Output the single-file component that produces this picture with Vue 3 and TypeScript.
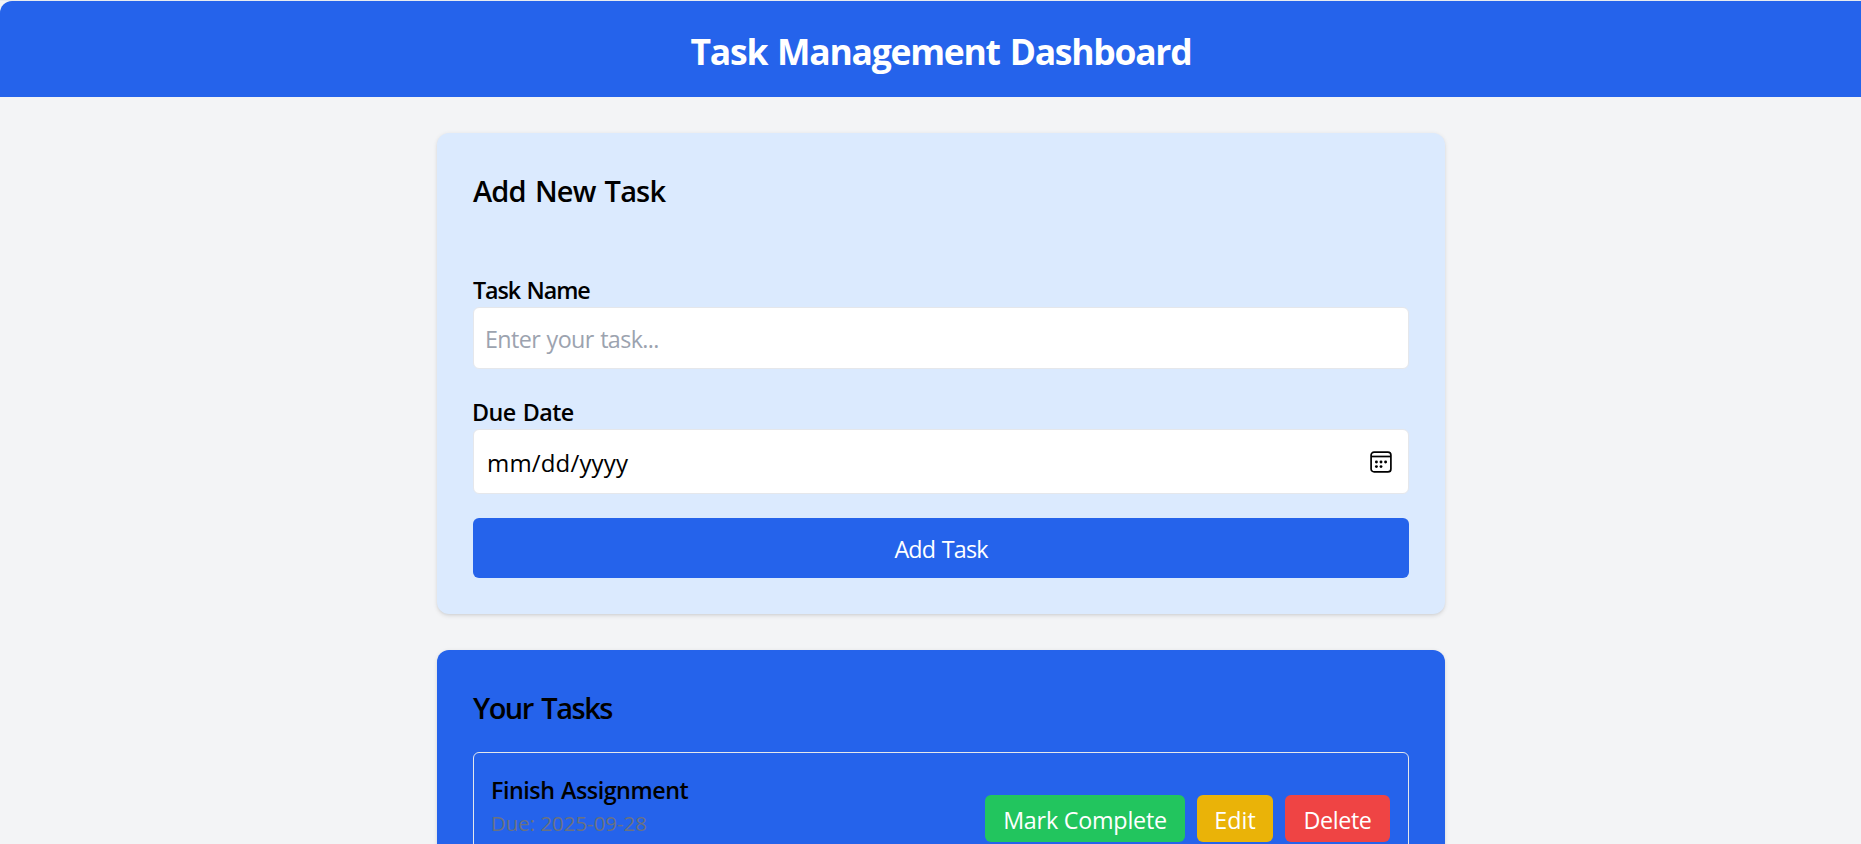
<script setup lang="ts">
import { ref } from 'vue'

interface Task {
  id: number
  name: string
  due: string
}

const taskName = ref('')
const tasks = ref<Task[]>([{ id: 1, name: 'Finish Assignment', due: '2025-09-28' }])
</script>

<template>
  <div class="viewport">
    <div class="page">
      <header class="header"><h1>Task Management Dashboard</h1></header>
      <main class="main">
        <section class="card add-card">
          <h2 class="add-title">Add New Task</h2>
          <form @submit.prevent>
            <div class="field">
              <label class="name-label" for="name">Task Name</label>
              <input id="name" v-model="taskName" class="control" type="text" placeholder="Enter your task..." />
            </div>
            <div class="field">
              <span class="label date-label">Due Date</span>
              <div class="control date">
                <span>mm/dd/yyyy</span>
                <svg width="23" height="23" viewBox="0 0 23 23" fill="none" stroke="#000" stroke-width="1.7">
                  <rect x="1.1" y="1.1" width="19.8" height="19.8" rx="3" />
                  <path d="M1.1 5.5h19.8" />
                  <g fill="#000" stroke="none">
                    <circle cx="6.4" cy="11" r="1.45" />
                    <circle cx="11" cy="11" r="1.45" />
                    <circle cx="15.6" cy="11" r="1.45" />
                    <circle cx="6.4" cy="15.6" r="1.45" />
                    <circle cx="11" cy="15.6" r="1.45" />
                  </g>
                </svg>
              </div>
            </div>
            <button class="submit" type="submit">Add Task</button>
          </form>
        </section>
        <section class="card list-card">
          <h2 class="list-title">Your Tasks</h2>
          <article v-for="task in tasks" :key="task.id" class="task">
            <div>
              <h3>{{ task.name }}</h3>
              <p>Due: {{ task.due }}</p>
            </div>
            <div class="actions">
              <button class="complete">Mark Complete</button>
              <button class="edit">Edit</button>
              <button class="delete">Delete</button>
            </div>
          </article>
        </section>
      </main>
    </div>
  </div>
</template>

<style>
body { margin: 0; background: #f3f4f6; overflow: hidden; }
</style>

<style scoped>
* { box-sizing: border-box; }
h1, h2, h3, p { margin: 0; }
.viewport {
  height: 844px;
  overflow: hidden;
  background: #f3f4f6;
  font: 400 23.3px/36px "Open Sans", "Noto Sans", sans-serif;
  color: #000;
}
.page { width: 1882px; border-top: 1px solid #e8ebef; }
.header {
  height: 96px;
  padding-top: 26px;
  background: #2563eb;
  border-top-left-radius: 12px;
  color: #fff;
  text-align: center;
}
h1 { font-size: 35.5px; line-height: 48px; font-weight: 700; letter-spacing: -1.27px; word-spacing: 2px; }
.main { width: 1008px; margin: 36px auto 0; }
.card {
  padding: 36px;
  border-radius: 12px;
  box-shadow: 0 1.5px 4.5px rgba(0, 0, 0, 0.1), 0 1.5px 3px -1.5px rgba(0, 0, 0, 0.1);
}
.add-card { height: 481px; background: #dbeafe; }
.list-card { height: 320px; margin-top: 36px; background: #2563eb; }
h2 { height: 42px; padding-top: 1px; font-size: 29px; line-height: 42px; font-weight: 600; }
.add-title { margin-bottom: 60px; letter-spacing: -0.85px; word-spacing: 2.5px; }
.list-title { margin-bottom: 24px; letter-spacing: -1.5px; word-spacing: 2.5px; }
.field { display: flex; flex-direction: column; margin-bottom: 24px; }
label, .label { height: 36px; padding-top: 1px; font-size: 23.3px; font-weight: 600; word-spacing: 1.5px; }
.name-label { letter-spacing: -1.07px; }
.date-label { margin-left: -1px; letter-spacing: -0.55px; }
.control {
  width: 100%;
  height: 62px;
  padding: 13px 12px 11px 11px;
  border: 1px solid #e5e7eb;
  border-radius: 6px;
  background: #fff;
  font: inherit;
  letter-spacing: -0.6px;
  word-spacing: 1px;
  color: #000;
}
.control::placeholder { color: #9ca3af; opacity: 1; }
.date {
  display: flex;
  align-items: flex-start;
  justify-content: space-between;
  height: 65px;
  padding: 15px 15px 0 13px;
  font-size: 24px;
  letter-spacing: 0.17px;
}
.date svg { margin-top: 6px; }
button { border: 0; border-radius: 6px; font: inherit; color: #fff; }
.submit {
  display: block;
  width: 100%;
  height: 60px;
  padding: 1px 0 0;
  background: #2563eb;
  letter-spacing: -0.85px;
  word-spacing: 1.5px;
}
.task {
  display: flex;
  align-items: center;
  justify-content: space-between;
  height: 133px;
  padding: 18px;
  border: 1px solid #e5e7eb;
  border-radius: 6px;
}
.task > div:first-child { align-self: flex-start; margin-left: -1px; padding-top: 1px; }
h3 { font-size: 23.3px; line-height: 36px; font-weight: 600; letter-spacing: -0.48px; word-spacing: 1px; }
.task p { font-size: 20.5px; line-height: 30px; color: #6b7280; letter-spacing: -0.05px; }
.actions { display: flex; gap: 12px; }
.actions button { height: 47px; padding: 2px 0 0; }
.actions .complete { width: 200px; background: #22c55e; letter-spacing: -0.22px; }
.actions .edit { width: 76px; background: #eab308; }
.actions .delete { width: 105px; background: #ef4444; letter-spacing: -0.4px; }
</style>
